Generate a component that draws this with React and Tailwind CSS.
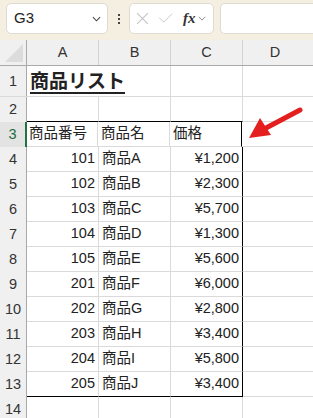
const rows = [
  ["101", "商品A", "¥1,200"],
  ["102", "商品B", "¥2,300"],
  ["103", "商品C", "¥5,700"],
  ["104", "商品D", "¥1,300"],
  ["105", "商品E", "¥5,600"],
  ["201", "商品F", "¥6,000"],
  ["202", "商品G", "¥2,800"],
  ["203", "商品H", "¥3,400"],
  ["204", "商品I", "¥5,800"],
  ["205", "商品J", "¥3,400"],
];

const font = { fontFamily: '"Liberation Sans", "Noto Sans CJK JP", sans-serif' };

function Chevron({ className }) {
  return (
    <svg viewBox="0 0 10 6" className={className} fill="none" stroke="currentColor" strokeWidth="1.2">
      <path d="M1 1l4 4 4-4" />
    </svg>
  );
}

function RowHead({ n, active, tall }) {
  return (
    <div
      className={`w-[27px] shrink-0 flex items-center justify-center border-r text-[14.5px] ${
        active ? "bg-[#e3e3e3] border-[#217346] border-r-2 text-[#1e6b41]" : "bg-[#f0f0f0] border-[#a9a9a9] text-[#333]"
      } ${tall ? "pt-[2px]" : ""}`}
    >
      {n}
    </div>
  );
}

export default function App() {
  return (
    <div className="relative w-[313px] h-[418px] overflow-hidden bg-white text-[#222]" style={font}>
      {/* formula bar */}
      <div className="h-[40px] bg-[#f4efe1] flex items-start pt-[3px] pl-[6px] gap-0">
        <div className="w-[102px] h-[31px] rounded-[5px] border border-[#dedbd3] bg-white flex items-center justify-between pl-[7px] pr-[6px]">
          <span className="text-[15px] text-[#222]">G3</span>
          <Chevron className="w-[9px] h-[6px] text-[#444]" />
        </div>
        <div className="w-[21px] h-[31px] flex flex-col items-center justify-center gap-[2px]">
          <span className="w-[2px] h-[2px] bg-[#444]" />
          <span className="w-[2px] h-[2px] bg-[#444]" />
          <span className="w-[2px] h-[2px] bg-[#444]" />
        </div>
        <div className="w-[85px] h-[31px] rounded-[5px] border border-[#dedbd3] bg-white flex items-center pl-[6px] gap-[9px]">
          <svg viewBox="0 0 12 12" className="w-[13px] h-[13px]" fill="none" stroke="#c4c4c4" strokeWidth="1">
            <path d="M1 1l10 10M11 1L1 11" />
          </svg>
          <svg viewBox="0 0 16 12" className="w-[15px] h-[11px]" fill="none" stroke="#c4c4c4" strokeWidth="1">
            <path d="M1 5l5 5 9-9" />
          </svg>
          <div className="flex items-center gap-[2px] ml-[1px]">
            <span className="italic font-bold text-[15px] text-[#333]" style={{ fontFamily: '"Liberation Serif", serif' }}>fx</span>
            <Chevron className="w-[8px] h-[5px] text-[#888]" />
          </div>
        </div>
        <div className="flex-1 ml-[6px] h-[31px] rounded-l-[5px] border border-r-0 border-[#dedbd3] bg-white" />
      </div>

      {/* column headers */}
      <div className="h-[26px] flex bg-[#f0f0f0] border-b border-[#a9a9a9] text-[14.5px] text-[#333]">
        <div className="w-[27px] shrink-0 border-r border-[#a9a9a9] flex items-end justify-end pb-[3px] pr-[3px]">
          <svg viewBox="0 0 18 18" className="w-[18px] h-[18px]">
            <path d="M18 0V18H0Z" fill="#dcdcdc" />
          </svg>
        </div>
        {["A", "B", "C"].map((c) => (
          <div key={c} className="w-[72px] shrink-0 border-r border-[#d4d4d4] flex items-center justify-center">{c}</div>
        ))}
        <div className="flex-1 flex items-center justify-center pr-[6px]">D</div>
      </div>

      {/* row 1 */}
      <div className="h-[31px] flex border-b border-[#dadada]">
        <RowHead n="1" tall />
        <div className="w-[72px] shrink-0 border-r border-transparent relative">
          <span className="absolute left-[3px] top-[2px] whitespace-nowrap font-bold text-[19px] underline underline-offset-[4px] decoration-[1.5px]">商品リスト</span>
        </div>
        <div className="w-[72px] shrink-0 border-r border-[#dadada]" />
        <div className="w-[72px] shrink-0 border-r border-[#dadada]" />
        <div className="flex-1" />
      </div>

      {/* row 2 */}
      <div className="h-[25px] flex">
        <RowHead n="2" />
        <div className="w-[72px] shrink-0 border-r border-b border-[#dadada] border-b-black" />
        <div className="w-[72px] shrink-0 border-r border-b border-[#dadada] border-b-black" />
        <div className="w-[72px] shrink-0 border-r border-b border-[#dadada] border-b-black" />
        <div className="flex-1 border-b border-[#dadada]" />
      </div>

      {/* row 3 header */}
      <div className="h-[25px] flex text-[14.5px]">
        <RowHead n="3" active />
        <div className="w-[71px] shrink-0 border-r border-b border-[#dadada] flex items-center pl-[2px]">商品番号</div>
        <div className="w-[72px] shrink-0 border-r border-b border-[#dadada] flex items-center pl-[3px]">商品名</div>
        <div className="w-[72px] shrink-0 border-r border-b border-[#dadada] border-r-black flex items-center pl-[3px]">価格</div>
        <div className="flex-1 border-b border-[#dadada]" />
      </div>

      {rows.map(([id, name, price], i) => {
        const last = i === rows.length - 1;
        const b = last ? "border-b-black" : "";
        return (
          <div key={id} className="h-[25px] flex text-[14.5px]">
            <RowHead n={String(i + 4)} />
            <div className={`w-[72px] shrink-0 border-r border-b border-[#dadada] ${b} flex items-center justify-end pr-[3px]`}>{id}</div>
            <div className={`w-[72px] shrink-0 border-r border-b border-[#dadada] ${b} flex items-center pl-[3px]`}>{name}</div>
            <div className={`w-[72px] shrink-0 border-r border-b border-[#dadada] border-r-black ${b} flex items-center justify-end pr-[3px]`}>{price}</div>
            <div className="flex-1 border-b border-[#dadada]" />
          </div>
        );
      })}

      {/* row 14 */}
      <div className="h-[25px] flex">
        <RowHead n="14" />
        <div className="w-[72px] shrink-0 border-r border-[#dadada]" />
        <div className="w-[72px] shrink-0 border-r border-[#dadada]" />
        <div className="w-[72px] shrink-0 border-r border-[#dadada]" />
        <div className="flex-1" />
      </div>

      {/* red arrow annotation */}
      <svg className="absolute left-[246px] top-[106px] w-[58px] h-[36px]" viewBox="0 0 58 36">
        <path d="M54 4L20 22" stroke="#e3201f" strokeWidth="5" strokeLinecap="round" />
        <path d="M3 32L14 12L25 29Z" fill="#e3201f" />
      </svg>
    </div>
  );
}
